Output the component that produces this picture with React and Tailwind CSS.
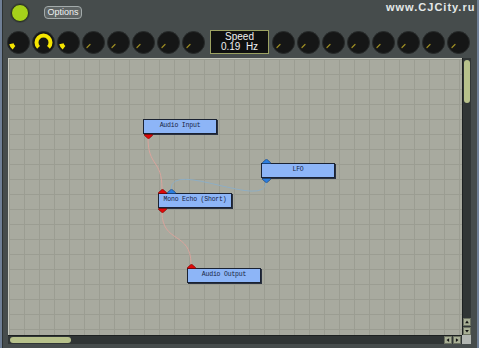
import React from "react";

/* =========================================================
   KNOB
========================================================= */
function Knob({ mode = "off" }) {
    return (
        <svg width="23" height="23" viewBox="0 0 23 23" className="shrink-0">
            <circle cx="11.5" cy="11.5" r="11" fill="#151616" stroke="#272a2a" strokeWidth="1" />
            {mode === "off" && (
                <line x1="5" y1="16.5" x2="8" y2="13.5" stroke="#9a8a22" strokeWidth="1.3" strokeLinecap="round" />
            )}
            {mode === "dot" && (
                <path d="M7 16.8 A7 7 0 0 1 4.4 12.8" fill="none" stroke="#f4e400" strokeWidth="4.5" />
            )}
            {mode === "arc" && (
                <path d="M6.55 16.45 A7 7 0 1 1 16.45 16.45" fill="none" stroke="#f6e600" strokeWidth="4" />
            )}
        </svg>
    );
}

/* =========================================================
   PORT (small connector)
========================================================= */
function Port({ dir = "down", color = "red", className = "" }) {
    const fill = color === "red" ? "#e00808" : "#2c7ee0";
    const stroke = color === "red" ? "#700000" : "#103a70";
    const pts = dir === "down" ? "0.5,0.5 8.5,0.5 8.5,1.5 4.5,5 0.5,1.5" : "0.5,4.5 8.5,4.5 8.5,3.5 4.5,0 0.5,3.5";
    return (
        <svg width="9" height="5" viewBox="0 0 9 5" className={`absolute ${className}`}>
            <polygon points={pts} fill={fill} stroke={stroke} strokeWidth="0.6" />
        </svg>
    );
}

/* =========================================================
   NODE
========================================================= */
function Node({ label, left, top, children }) {
    return (
        <div
            className="absolute w-[74px] h-[15px] bg-[#8db5f7] border border-[#1a2232] shadow-[1px_1px_0_#2a3140] flex items-center justify-center"
            style={{ left, top }}
        >
            <span className="font-['Liberation_Mono',monospace] text-[6.5px] tracking-[-0.2px] text-[#17233f] leading-none whitespace-nowrap">
                {label}
            </span>
            {children}
        </div>
    );
}

/* =========================================================
   SCROLL BUTTON
========================================================= */
function ScrollBtn({ dir }) {
    const pts = {
        up: "4,2 1.5,5.5 6.5,5.5",
        down: "1.5,2.5 6.5,2.5 4,6",
        left: "2,4 5.5,1.5 5.5,6.5",
        right: "2.5,1.5 2.5,6.5 6,4",
    }[dir];
    return (
        <div className="w-[8px] h-[8px] bg-[#a9b096] border border-[#6c7262] flex items-center justify-center">
            <svg width="8" height="8" viewBox="0 0 8 8">
                <polygon points={pts} fill="#111" />
            </svg>
        </div>
    );
}

export default function App() {
    const leftKnobs = ["dot", "arc", "dot", "off", "off", "off", "off", "off"];
    const rightKnobs = ["off", "off", "off", "off", "off", "off", "off", "off"];

    return (
        <div className="w-[479px] h-[348px] bg-[#6f7f96] pl-[2px] pr-[2px] overflow-hidden font-['Liberation_Sans',sans-serif]">
            <div className="relative h-full bg-[#464c4c] border-l border-[#2c3131] flex flex-col">

                {/* WATERMARK */}
                <div className="absolute top-[1px] left-[383px] text-[11px] font-bold tracking-[1px] text-[#e4e8e8] whitespace-nowrap leading-[13px]">
                    www.CJCity.ru
                </div>

                {/* TOP ROW */}
                <div className="flex items-start h-[30px] shrink-0">
                    <div className="ml-[8px] mt-[4px] w-[18px] h-[18px] rounded-full bg-[#a6d11a] border border-[#262b22] shadow-[0_0_0_1px_#3a4040]" />
                    <div className="ml-[15px] mt-[6px] w-[38px] h-[13px] rounded-[4px] bg-[#5e6464] border border-[#a3abab] flex items-center justify-center text-[9px] text-[#eef2f2] leading-none">
                        Options
                    </div>
                </div>

                {/* KNOB ROW */}
                <div className="flex items-center h-[24px] pl-[4px] shrink-0">
                    <div className="flex gap-[2px]">
                        {leftKnobs.map((m, i) => (
                            <Knob key={i} mode={m} />
                        ))}
                    </div>
                    <div className="ml-[5px] w-[59px] h-[24px] bg-[#0f1010] border border-[#9ca262] flex flex-col items-center justify-center text-[10px] leading-[10px] text-[#f0f0f0]">
                        <span>Speed</span>
                        <span>0.19&nbsp;&nbsp;Hz</span>
                    </div>
                    <div className="ml-[3px] flex gap-[2px]">
                        {rightKnobs.map((m, i) => (
                            <Knob key={i} mode={m} />
                        ))}
                    </div>
                </div>

                {/* CANVAS + VSCROLL */}
                <div className="flex mt-[4px] pl-[5px] shrink-0">
                    <div className="relative w-[454px] h-[277px] overflow-hidden bg-[#a8aa9f] border-t border-l border-[#c6c8be] bg-[linear-gradient(to_right,#9b9d92_1px,transparent_1px),linear-gradient(to_bottom,#9b9d92_1px,transparent_1px)] bg-[size:15px_15px]">
                        {/* WIRES */}
                        <svg width="454" height="277" className="absolute left-0 top-0">
                            <path d="M139 79 C139 108, 153 100, 153 130" fill="none" stroke="#d9a49c" strokeWidth="1" />
                            <path d="M153 153 C153 185, 182 172, 182 205" fill="none" stroke="#d9a49c" strokeWidth="1" />
                            <path d="M257 123 C257 152, 162 100, 162 130" fill="none" stroke="#8eaec4" strokeWidth="1" />
                        </svg>

                        {/* NODES */}
                        <Node label="Audio Input" left={134} top={60}>
                            <Port dir="down" color="red" className="left-[0px] top-[14px]" />
                        </Node>
                        <Node label="LFO" left={252} top={104}>
                            <Port dir="up" color="blue" className="left-[0px] top-[-5px]" />
                            <Port dir="down" color="blue" className="left-[0px] top-[14px]" />
                        </Node>
                        <Node label="Mono Echo (Short)" left={149} top={134}>
                            <Port dir="up" color="red" className="left-[-1px] top-[-5px]" />
                            <Port dir="up" color="blue" className="left-[8px] top-[-5px]" />
                            <Port dir="down" color="red" className="left-[-1px] top-[14px]" />
                        </Node>
                        <Node label="Audio Output" left={178} top={209}>
                            <Port dir="up" color="red" className="left-[-1px] top-[-5px]" />
                        </Node>
                    </div>

                    {/* VERTICAL SCROLLBAR */}
                    <div className="w-[9px] h-[277px] bg-[#303535] border-l border-[#1d2121] flex flex-col items-center">
                        <div className="mt-[2px] w-[6px] h-[43px] rounded-full bg-[#b7c18b]" />
                        <div className="flex-1" />
                        <ScrollBtn dir="up" />
                        <div className="h-[1px]" />
                        <ScrollBtn dir="down" />
                    </div>
                </div>

                {/* HORIZONTAL SCROLLBAR */}
                <div className="flex pl-[5px] shrink-0">
                    <div className="w-[454px] h-[9px] bg-[#303535] border-t border-[#1d2121] flex items-center">
                        <div className="ml-[2px] w-[61px] h-[6px] rounded-full bg-[#b7c18b]" />
                        <div className="flex-1" />
                        <ScrollBtn dir="left" />
                        <div className="w-[1px]" />
                        <ScrollBtn dir="right" />
                        <div className="w-[1px]" />
                    </div>
                    <div className="w-[9px] h-[9px] bg-[#b2b6b2]" />
                </div>
            </div>
        </div>
    );
}
